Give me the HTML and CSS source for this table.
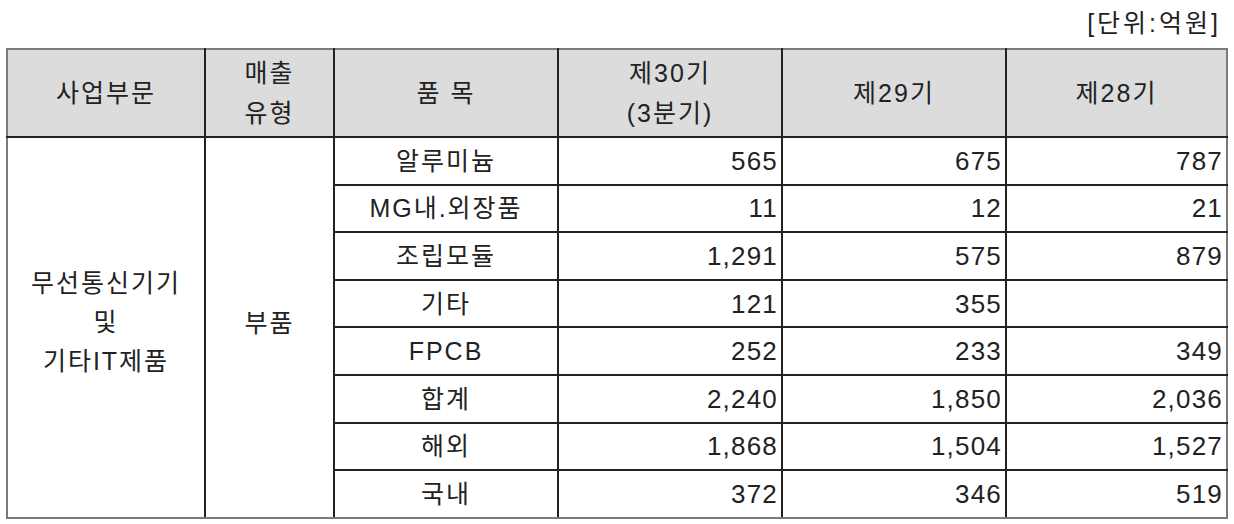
FILE: index.html
```html
<!DOCTYPE html>
<html lang="ko">
<head>
<meta charset="utf-8">
<link rel="stylesheet" href="styles.css">
</head>
<body>
<div class="page">
  <div class="unit">[단위:억원]</div>
  <table class="sales">
    <colgroup>
      <col class="c1"><col class="c2"><col class="c3"><col class="c4"><col class="c5"><col class="c6">
    </colgroup>
    <thead>
      <tr class="head">
        <th>사업부문</th>
        <th>매출<br>유형</th>
        <th>품 목</th>
        <th>제30기<br>(3분기)</th>
        <th>제29기</th>
        <th>제28기</th>
      </tr>
    </thead>
    <tbody>
      <tr>
        <td class="seg" rowspan="8">무선통신기기<br>및<br>기타IT제품</td>
        <td class="type" rowspan="8">부품</td>
        <td class="item">알루미늄</td>
        <td class="num">565</td><td class="num">675</td><td class="num">787</td>
      </tr>
      <tr><td class="item">MG내.외장품</td><td class="num">11</td><td class="num">12</td><td class="num">21</td></tr>
      <tr><td class="item">조립모듈</td><td class="num">1,291</td><td class="num">575</td><td class="num">879</td></tr>
      <tr><td class="item">기타</td><td class="num">121</td><td class="num">355</td><td class="num"></td></tr>
      <tr><td class="item">FPCB</td><td class="num">252</td><td class="num">233</td><td class="num">349</td></tr>
      <tr><td class="item">합계</td><td class="num">2,240</td><td class="num">1,850</td><td class="num">2,036</td></tr>
      <tr><td class="item">해외</td><td class="num">1,868</td><td class="num">1,504</td><td class="num">1,527</td></tr>
      <tr><td class="item">국내</td><td class="num">372</td><td class="num">346</td><td class="num">519</td></tr>
    </tbody>
  </table>
</div>
</body>
</html>
```

FILE: styles.css
```css
html, body {
  margin: 0;
  padding: 0;
  background: #ffffff;
}

body {
  font-family: "Liberation Sans", "Noto Sans CJK KR", sans-serif;
  font-size: 25px;
  color: #222222;
  letter-spacing: 2px;
}

.page {
  padding: 0 0 0 6px;
}

.unit {
  height: 48px;
  line-height: 46px;
  text-align: right;
  padding-right: 13px;
  letter-spacing: 3px;
}

.sales {
  border-collapse: collapse;
  table-layout: fixed;
  width: 1222px;
  border: 2px solid #7a7a7a;
}

.c1 { width: 198px; }
.c2 { width: 129px; }
.c3 { width: 224px; }
.c4 { width: 224px; }
.c5 { width: 224px; }
.c6 { width: 221px; }

.sales th,
.sales td {
  border: 2px solid #222222;
  padding: 0;
  font-weight: 400;
}

.sales tr > :first-child { border-left-color: #7a7a7a; }
.sales tr > :last-child { border-right-color: #7a7a7a; }
.sales thead th { border-top-color: #7a7a7a; }
.sales tbody tr:last-child td { border-bottom-color: #7a7a7a; }
.sales td.seg, .sales td.type { border-bottom-color: #7a7a7a; }
.sales td.seg { border-left-color: #7a7a7a; }

.head {
  height: 88px;
}

.head th {
  background: #dcdcdc;
  text-align: center;
  vertical-align: middle;
  line-height: 40px;
}

.sales tbody tr {
  height: 47.6px;
}

.seg, .type {
  text-align: center;
  vertical-align: middle;
  line-height: 39px;
}

.sales td.seg { padding-bottom: 10px; }
.sales td.type { padding-bottom: 8px; }

.item {
  text-align: center;
  vertical-align: middle;
  line-height: 30px;
}

.sales td.num {
  text-align: right;
  vertical-align: middle;
  line-height: 30px;
  font-size: 26px;
  letter-spacing: 1.2px;
  padding-right: 3px;
}
```
